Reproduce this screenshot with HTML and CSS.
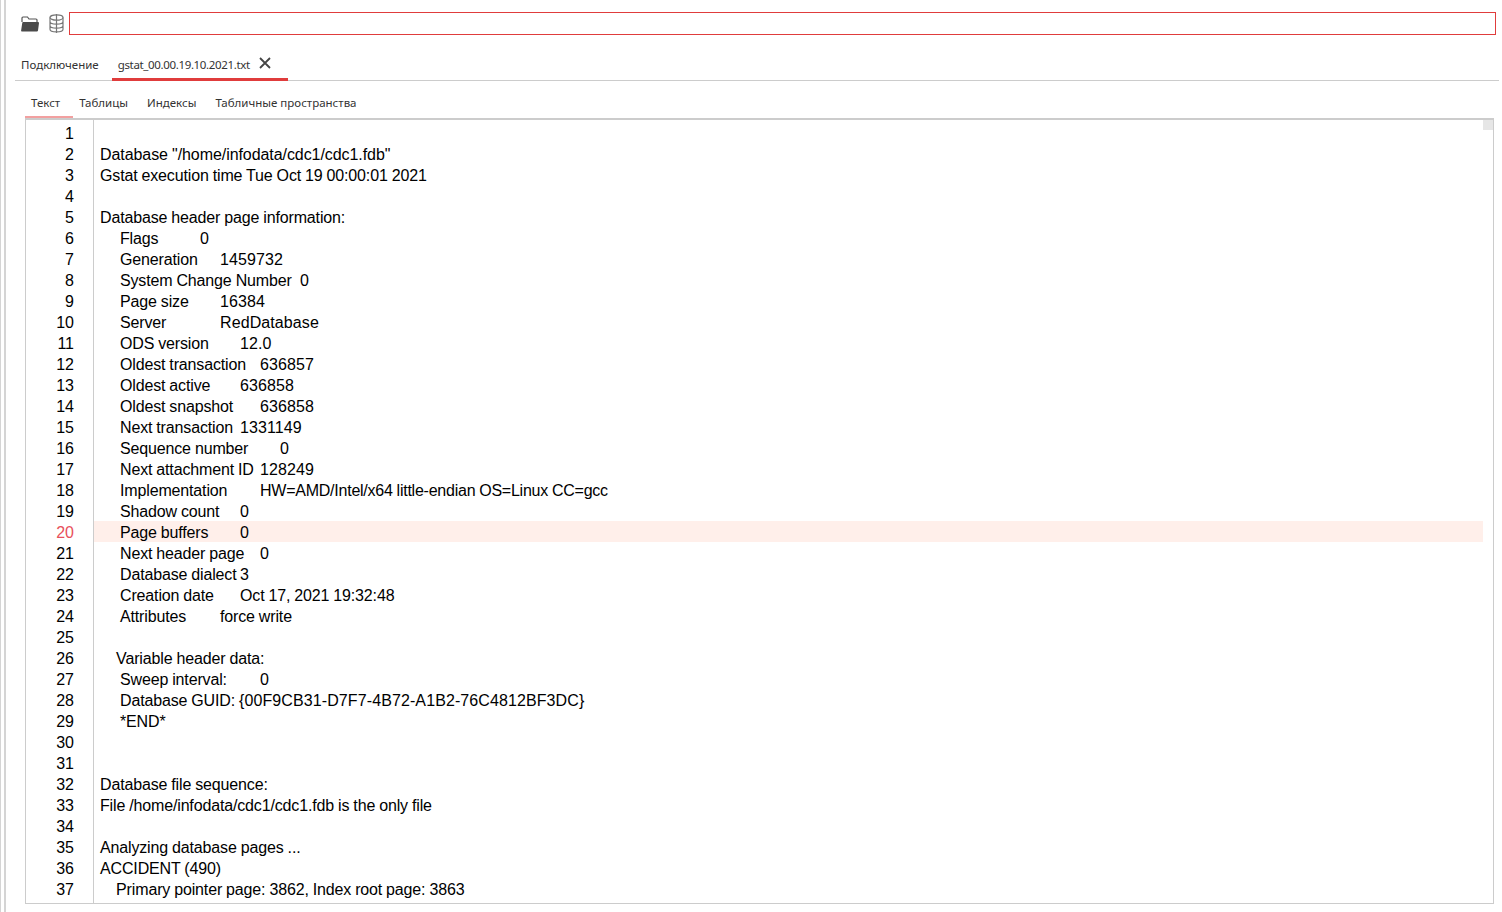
FILE: index.html
```html
<!DOCTYPE html>
<html lang="ru">
<head>
<meta charset="utf-8">
<title>gstat</title>
<link rel="stylesheet" href="styles.css">
</head>
<body>
<div class="app">
  <div class="toolbar">
    <svg class="icon-folder" viewBox="0 0 18 16" width="18" height="16"><path d="M1 6V2C1 1.400 1.400 1 2 1H6.500L8 3H15C15.600 3 16 3.400 16 4V6" fill="none" stroke="#555" stroke-width="1.200"/><path d="M.8 15.500C.3 15.500 0 15.100 .1 14.700L1.200 7.200C1.300 6.500 1.700 6 2.400 6H17C17.700 6 18.100 6.500 18 7.100L17 14.500C16.900 15.100 16.500 15.500 15.900 15.500Z" fill="#4a4a4a"/></svg>
    <svg class="icon-db" viewBox="0 0 15 19" width="15" height="19" fill="none" stroke="#777" stroke-width="1.200"><ellipse cx="7.500" cy="3.500" rx="6.500" ry="2.700"/><path d="M1 3.500V15.200C1 16.700 4 17.900 7.500 17.900S14 16.700 14 15.200V3.500M1 7.500C1 9 4 10.200 7.500 10.200S14 9 14 7.500M1 11.500C1 13 4 14.200 7.500 14.200S14 13 14 11.500M7.500 0V19"/></svg>
    <input class="path-input" type="text">
  </div>
  <div class="tabs">
    <div class="tab">Подключение</div>
    <div class="tab tab-active">gstat_00.00.19.10.2021.txt<svg class="close" viewBox="0 0 12 12" width="12" height="12"><path d="M1 1l10 10M11 1L1 11" stroke="#444" stroke-width="1.800" fill="none"/></svg></div>
  </div>
  <div class="subtabs">
    <div class="subtab subtab-active">Текст</div>
    <div class="subtab">Таблицы</div>
    <div class="subtab">Индексы</div>
    <div class="subtab">Табличные пространства</div>
  </div>
  <div class="editor">
    <div class="scroll-thumb"></div>
    <div class="row"><span class="num">1</span><span class="code"></span></div>
    <div class="row"><span class="num">2</span><span class="code path-line">Database "/home/infodata/cdc1/cdc1.fdb"</span></div>
    <div class="row"><span class="num">3</span><span class="code">Gstat execution time Tue Oct 19 00:00:01 2021</span></div>
    <div class="row"><span class="num">4</span><span class="code"></span></div>
    <div class="row"><span class="num">5</span><span class="code">Database header page information:</span></div>
    <div class="row"><span class="num">6</span><span class="code">	Flags		0</span></div>
    <div class="row"><span class="num">7</span><span class="code">	Generation		<span class="val">1459732</span></span></div>
    <div class="row"><span class="num">8</span><span class="code">	System Change Number	0</span></div>
    <div class="row"><span class="num">9</span><span class="code">	Page size		<span class="val">16384</span></span></div>
    <div class="row"><span class="num">10</span><span class="code">	Server			<span class="val">RedDatabase</span></span></div>
    <div class="row"><span class="num">11</span><span class="code">	ODS version		<span class="val">12.0</span></span></div>
    <div class="row"><span class="num">12</span><span class="code">	Oldest transaction	<span class="val">636857</span></span></div>
    <div class="row"><span class="num">13</span><span class="code">	Oldest active		<span class="val">636858</span></span></div>
    <div class="row"><span class="num">14</span><span class="code">	Oldest snapshot		<span class="val">636858</span></span></div>
    <div class="row"><span class="num">15</span><span class="code">	Next transaction	<span class="val">1331149</span></span></div>
    <div class="row"><span class="num">16</span><span class="code">	Sequence number		0</span></div>
    <div class="row"><span class="num">17</span><span class="code">	Next attachment ID	<span class="val">128249</span></span></div>
    <div class="row"><span class="num">18</span><span class="code">	Implementation		<span class="impl">HW=AMD/Intel/x64 little-endian OS=Linux CC=gcc</span></span></div>
    <div class="row"><span class="num">19</span><span class="code">	Shadow count	0</span></div>
    <div class="row row-current"><span class="num">20</span><span class="code">	Page buffers		0</span></div>
    <div class="row"><span class="num">21</span><span class="code">	Next header page	0</span></div>
    <div class="row"><span class="num">22</span><span class="code">	Database dialect	3</span></div>
    <div class="row"><span class="num">23</span><span class="code">	Creation date		Oct 17, 2021 19:32:48</span></div>
    <div class="row"><span class="num">24</span><span class="code">	Attributes		force write</span></div>
    <div class="row"><span class="num">25</span><span class="code"></span></div>
    <div class="row"><span class="num">26</span><span class="code">    Variable header data:</span></div>
    <div class="row"><span class="num">27</span><span class="code">	Sweep interval:		0</span></div>
    <div class="row"><span class="num">28</span><span class="code">	Database GUID: <span class="guid">{00F9CB31-D7F7-4B72-A1B2-76C4812BF3DC}</span></span></div>
    <div class="row"><span class="num">29</span><span class="code">	*END*</span></div>
    <div class="row"><span class="num">30</span><span class="code"></span></div>
    <div class="row"><span class="num">31</span><span class="code"></span></div>
    <div class="row"><span class="num">32</span><span class="code">Database file sequence:</span></div>
    <div class="row"><span class="num">33</span><span class="code">File /home/infodata/cdc1/cdc1.fdb is the only file</span></div>
    <div class="row"><span class="num">34</span><span class="code"></span></div>
    <div class="row"><span class="num">35</span><span class="code">Analyzing database pages ...</span></div>
    <div class="row"><span class="num">36</span><span class="code">ACCIDENT (490)</span></div>
    <div class="row"><span class="num">37</span><span class="code">    Primary pointer page: 3862, Index root page: 3863</span></div>
  </div>
</div>
</body>
</html>
```
FILE: styles.css
```css
html, body {
  margin: 0;
  height: 100%;
  background: #fff;
  overflow: hidden;
}
body {
  border-left: 1px solid #d4d4d4;
  box-sizing: border-box;
}
.app {
  height: 912px;
  width: 1495px;
  margin-left: 3px;
  padding-left: 9px;
  border-left: 2px solid #d4d4d4;
  box-sizing: border-box;
  font-family: "Noto Sans", sans-serif;
  color: #333;
}
.toolbar {
  display: flex;
  align-items: center;
  height: 23px;
  padding: 12px 3px 0 6px;
}
.icon-folder { margin-right: 10px; }
.icon-db { margin-right: 5px; }
.path-input {
  flex: 1;
  height: 23px;
  box-sizing: border-box;
  border: 1px solid #e03c3c;
  outline: none;
  padding: 0;
  margin: 0;
  background: #fff;
}
.tabs {
  display: flex;
  height: 46px;
  box-sizing: border-box;
  border-bottom: 1px solid #ccc;
  align-items: flex-end;
}
.tab {
  font-size: 11.5px;
  height: 26px;
  line-height: 22px;
  box-sizing: border-box;
  padding: 0 6px;
  white-space: nowrap;
  display: flex;
  align-items: flex-start;
}
.tab-active {
  border-bottom: 3px solid #e03c3c;
  margin-left: 7px;
  margin-bottom: -1px;
  height: 27px;
  padding-right: 17px;
  letter-spacing: -0.35px;
}
.close { margin-left: 9px; margin-top: 3px; }
.subtabs {
  display: flex;
  height: 37px;
  box-sizing: border-box;
  padding-left: 10px;
  align-items: flex-end;
}
.subtab {
  font-size: 11.5px;
  height: 26px;
  line-height: 22px;
  padding: 0 13px 0 6px;
  box-sizing: border-box;
  white-space: nowrap;
}
.subtab-active {
  border-bottom: 2px solid #f2a0a0;
}
.editor {
  position: relative;
  margin-left: 10px;
  width: 1469px;
  height: 786px;
  box-sizing: border-box;
  border: 1px solid #ccc;
  border-top-width: 2px;
  padding: 2px 10px 0 0;
  overflow: hidden;
  background: linear-gradient(#ccc, #ccc) 67px 0 / 1px 100% no-repeat;
  font-family: "Liberation Sans", Arial, sans-serif;
  font-size: 16px;
  line-height: 23px;
  color: #000;
}
.scroll-thumb {
  position: absolute;
  top: 0;
  right: 0;
  width: 10px;
  height: 10px;
  background: #e6e6e6;
}
.row {
  display: flex;
  height: 21px;
}
.num {
  width: 48px;
  flex: none;
  text-align: right;
  padding-right: 19px;
  margin-right: 1px;
}
.code {
  flex: 1;
  padding-left: 6px;
  white-space: pre;
  tab-size: 20px;
  letter-spacing: -0.15px;
  word-spacing: -0.27px;
}
.path-line { letter-spacing: -0.07px; }
.val { letter-spacing: 0.1px; }
.impl { letter-spacing: -0.24px; }
.guid { letter-spacing: 0.1px; }
.row-current .num { color: #e8505b; }
.row-current .code { background: #ffefea; }
```
